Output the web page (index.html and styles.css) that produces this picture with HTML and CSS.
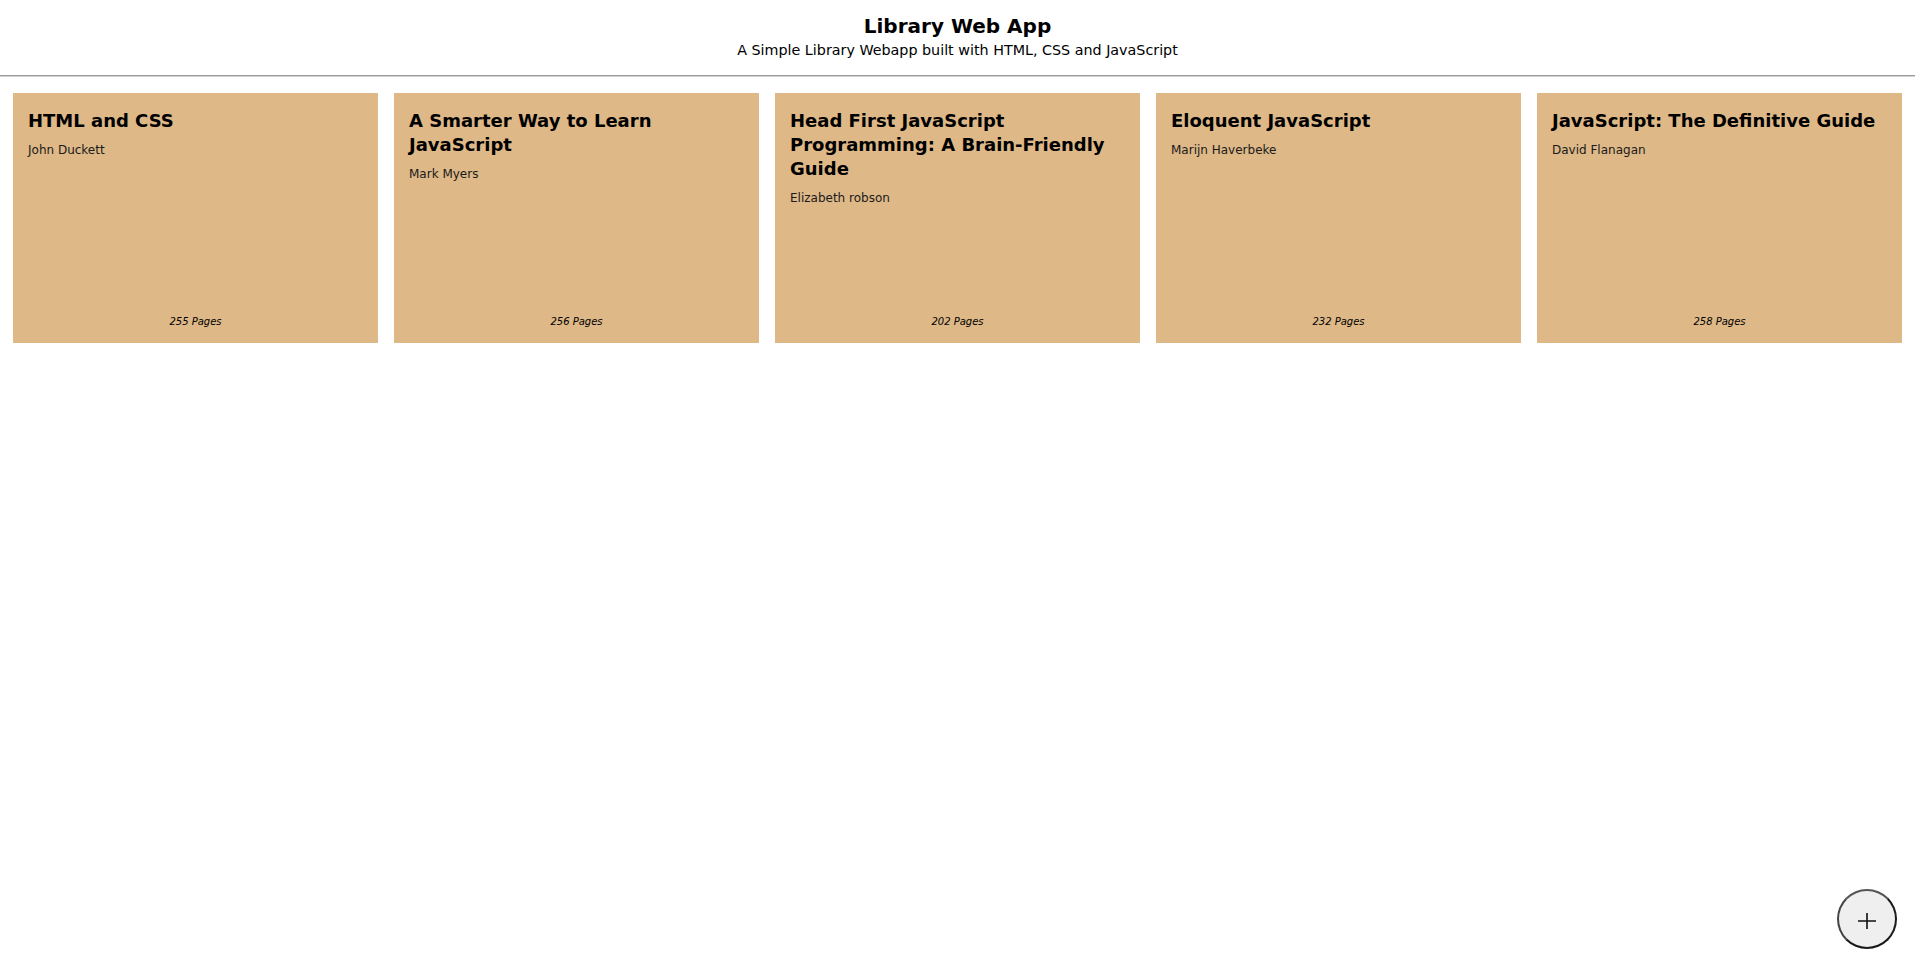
FILE: index.html
```html
<!DOCTYPE html>
<html lang="en">
<head>
<meta charset="utf-8">
<title>Library Web App</title>
<link rel="stylesheet" href="styles.css">
</head>
<body>
<header class="site-header">
  <h1 class="site-title">Library Web App</h1>
  <p class="site-subtitle">A Simple Library Webapp built with HTML, CSS and JavaScript</p>
</header>
<main class="library">
  <article class="book">
    <h2 class="book-title">HTML and CSS</h2>
    <p class="book-author">John Duckett</p>
    <p class="book-pages">255 Pages</p>
  </article>
  <article class="book">
    <h2 class="book-title">A Smarter Way to Learn JavaScript</h2>
    <p class="book-author">Mark Myers</p>
    <p class="book-pages">256 Pages</p>
  </article>
  <article class="book">
    <h2 class="book-title">Head First JavaScript Programming: A Brain-Friendly Guide</h2>
    <p class="book-author">Elizabeth robson</p>
    <p class="book-pages">202 Pages</p>
  </article>
  <article class="book">
    <h2 class="book-title">Eloquent JavaScript</h2>
    <p class="book-author">Marijn Haverbeke</p>
    <p class="book-pages">232 Pages</p>
  </article>
  <article class="book">
    <h2 class="book-title">JavaScript: The Definitive Guide</h2>
    <p class="book-author">David Flanagan</p>
    <p class="book-pages">258 Pages</p>
  </article>
</main>
<button class="add-button" type="button" aria-label="Add book">
  <svg class="add-icon" width="18" height="18" viewBox="0 0 18 18" aria-hidden="true">
    <path d="M0 9H18M9 1V17" stroke="#111" stroke-width="1.6" fill="none"/>
  </svg>
</button>
</body>
</html>
```

FILE: styles.css
```css
html, body {
  margin: 0;
  padding: 0;
  background: #ffffff;
}

body {
  font-family: "DejaVu Sans", "Liberation Sans", sans-serif;
  color: #000;
}

.site-header {
  text-align: center;
  padding: 14px 0 15px;
  border-bottom: 1px solid #9a9a9a;
  box-shadow: 0 1px 0 #d2d2d2;
}

.site-title {
  margin: 0;
  font-size: 20px;
  line-height: 24px;
  font-weight: bold;
}

.site-subtitle {
  margin: 2px 0 0;
  font-size: 14.3px;
  line-height: 20px;
}

.library {
  display: grid;
  grid-template-columns: repeat(5, 1fr);
  gap: 16px;
  padding: 17px 13px 16px;
}

.book {
  box-sizing: border-box;
  height: 250px;
  background: #deb887;
  padding: 16px 15px 15px;
  display: flex;
  flex-direction: column;
}

.book-title {
  margin: 0;
  font-size: 18px;
  line-height: 24px;
  font-weight: bold;
}

.book-author {
  margin: 9px 0 0;
  font-size: 12px;
  line-height: 16px;
  color: #1a1a1a;
}

.book-pages {
  margin: auto 0 0;
  font-size: 10px;
  line-height: 12px;
  font-style: italic;
  text-align: center;
}

.add-button {
  position: fixed;
  right: 18px;
  bottom: 18px;
  width: 60px;
  height: 60px;
  border-radius: 50%;
  background: #efefef;
  border: 2px solid #1a1a1a;
  border-top-color: #555;
  border-left-color: #444;
  padding: 0;
  display: flex;
  align-items: center;
  justify-content: center;
  cursor: pointer;
}

.add-icon {
  display: block;
  margin-top: 3px;
}
```
